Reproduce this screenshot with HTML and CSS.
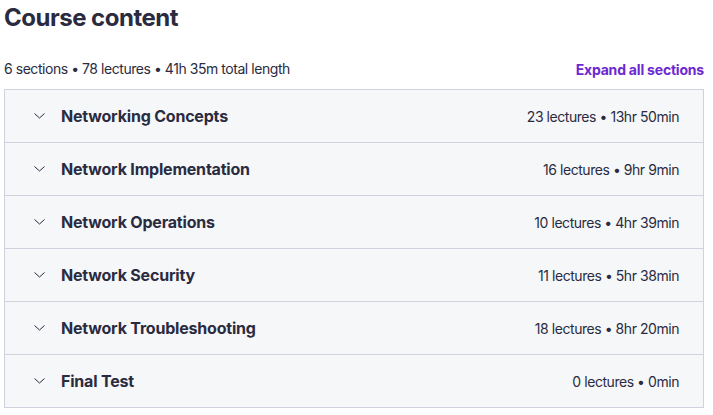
FILE: index.html
```html
<!DOCTYPE html>
<html>
<head>
  <title>Course content</title>
  <link rel="stylesheet" href="styles.css">
</head>
<body>
  <div class="course">
    <h2 class="title">Course content</h2>

    <div class="summary">
      <span>6 sections • 78 lectures • 41h 35m total length</span>
      <a class="expand" href="#">Expand all sections</a>
    </div>

    <div class="sections">
      <div class="section">
        <span class="chevron"><svg width="11" height="6" viewBox="0 0 11 6"><path d="M0.5 0.5 L5.5 5 L10.5 0.5" fill="none" stroke="currentColor" stroke-width="1"/></svg></span>
        <span class="name">Networking Concepts</span>
        <span class="meta">23 lectures • 13hr 50min</span>
      </div>
      <div class="section">
        <span class="chevron"><svg width="11" height="6" viewBox="0 0 11 6"><path d="M0.5 0.5 L5.5 5 L10.5 0.5" fill="none" stroke="currentColor" stroke-width="1"/></svg></span>
        <span class="name">Network Implementation</span>
        <span class="meta">16 lectures • 9hr 9min</span>
      </div>
      <div class="section">
        <span class="chevron"><svg width="11" height="6" viewBox="0 0 11 6"><path d="M0.5 0.5 L5.5 5 L10.5 0.5" fill="none" stroke="currentColor" stroke-width="1"/></svg></span>
        <span class="name">Network Operations</span>
        <span class="meta">10 lectures • 4hr 39min</span>
      </div>
      <div class="section">
        <span class="chevron"><svg width="11" height="6" viewBox="0 0 11 6"><path d="M0.5 0.5 L5.5 5 L10.5 0.5" fill="none" stroke="currentColor" stroke-width="1"/></svg></span>
        <span class="name">Network Security</span>
        <span class="meta">11 lectures • 5hr 38min</span>
      </div>
      <div class="section">
        <span class="chevron"><svg width="11" height="6" viewBox="0 0 11 6"><path d="M0.5 0.5 L5.5 5 L10.5 0.5" fill="none" stroke="currentColor" stroke-width="1"/></svg></span>
        <span class="name">Network Troubleshooting</span>
        <span class="meta">18 lectures • 8hr 20min</span>
      </div>
      <div class="section">
        <span class="chevron"><svg width="11" height="6" viewBox="0 0 11 6"><path d="M0.5 0.5 L5.5 5 L10.5 0.5" fill="none" stroke="currentColor" stroke-width="1"/></svg></span>
        <span class="name">Final Test</span>
        <span class="meta">0 lectures • 0min</span>
      </div>
    </div>
  </div>
</body>
</html>
```

FILE: styles.css
```css
body {
  margin: 0;
  padding: 0;
  font-family: Inter, "Noto Sans", sans-serif;
  color: #2a2b3f;
  background-color: #fff;
}

.course {
  width: 700px;
  padding: 0 9px 0 4px;
}

.title {
  font-size: 24px;
  font-weight: 700;
  margin: 0;
  padding-top: 3px;
  line-height: 30px;
  letter-spacing: -0.5px;
}

.summary {
  display: flex;
  justify-content: space-between;
  align-items: center;
  margin-top: 24px;
  height: 22px;
  font-size: 14px;
  letter-spacing: -0.45px;
}

.expand {
  color: #6d28d2;
  font-weight: 700;
  text-decoration: none;
  letter-spacing: -0.2px;
  margin-top: 2px;
}

.sections {
  margin-top: 10px;
  border: 1px solid #d1d2e0;
}

.section {
  display: flex;
  align-items: center;
  height: 52px;
  padding: 0 24px 0 29px;
  background-color: #f6f7f9;
  border-bottom: 1px solid #d1d2e0;
}

.section:last-child {
  border-bottom: none;
}

.chevron {
  display: flex;
  width: 11px;
  margin-right: 16px;
  color: #2a2b3f;
}

.name {
  font-size: 16px;
  font-weight: 700;
  letter-spacing: -0.2px;
  flex: 1;
}

.meta {
  font-size: 14px;
  letter-spacing: -0.45px;
}
```
